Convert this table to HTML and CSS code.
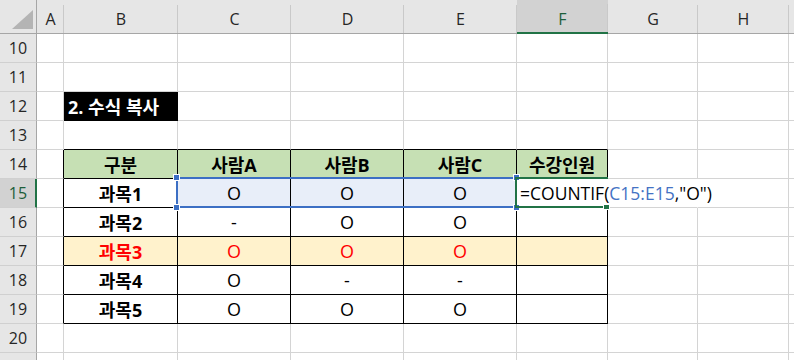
FILE: index.html
```html
<!DOCTYPE html>
<html lang="ko">
<head>
<meta charset="utf-8">
<title>수식 복사</title>
<link rel="stylesheet" href="styles.css">
</head>
<body>
<div class="sheet">
  <div class="ch corner"><span class="tri"></span></div>
  <div class="ch">A</div><div class="ch">B</div><div class="ch">C</div><div class="ch">D</div><div class="ch">E</div><div class="ch csel">F</div><div class="ch">G</div><div class="ch">H</div><div class="ch rest"></div>

  <div class="rh">10</div><div class="c"></div><div class="c"></div><div class="c"></div><div class="c"></div><div class="c"></div><div class="c"></div><div class="c"></div><div class="c"></div><div class="c rest"></div>
  <div class="rh">11</div><div class="c"></div><div class="c"></div><div class="c"></div><div class="c"></div><div class="c"></div><div class="c"></div><div class="c"></div><div class="c"></div><div class="c rest"></div>
  <div class="rh">12</div><div class="c"></div><div class="c title">2. 수식 복사</div><div class="c"></div><div class="c"></div><div class="c"></div><div class="c"></div><div class="c"></div><div class="c"></div><div class="c rest"></div>
  <div class="rh">13</div><div class="c"></div><div class="c tt"></div><div class="c tt"></div><div class="c tt"></div><div class="c tt"></div><div class="c tt"></div><div class="c"></div><div class="c"></div><div class="c rest"></div>

  <div class="rh">14</div><div class="c tl"></div><div class="c tb hd b">구분</div><div class="c tb hd b">사람A</div><div class="c tb hd b">사람B</div><div class="c tb hd b">사람C</div><div class="c tb hd b">수강인원</div><div class="c"></div><div class="c"></div><div class="c rest"></div>
  <div class="rh rsel">15</div><div class="c tl"></div><div class="c tb b">과목1</div><div class="c tb sel">O</div><div class="c tb sel">O</div><div class="c tb sel">O</div><div class="c tb nr left"><span class="formula">=COUNTIF(<span class="ref">C15:E15</span>,"O")</span></div><div class="c nr"></div><div class="c"></div><div class="c rest"></div>
  <div class="rh">16</div><div class="c tl"></div><div class="c tb b">과목2</div><div class="c tb">-</div><div class="c tb">O</div><div class="c tb">O</div><div class="c tb"></div><div class="c"></div><div class="c"></div><div class="c rest"></div>
  <div class="rh">17</div><div class="c tl"></div><div class="c tb y b red">과목3</div><div class="c tb y red">O</div><div class="c tb y red">O</div><div class="c tb y red">O</div><div class="c tb y"></div><div class="c"></div><div class="c"></div><div class="c rest"></div>
  <div class="rh">18</div><div class="c tl"></div><div class="c tb b">과목4</div><div class="c tb">O</div><div class="c tb">-</div><div class="c tb">-</div><div class="c tb"></div><div class="c"></div><div class="c"></div><div class="c rest"></div>
  <div class="rh">19</div><div class="c tl"></div><div class="c tb b">과목5</div><div class="c tb">O</div><div class="c tb">O</div><div class="c tb">O</div><div class="c tb"></div><div class="c"></div><div class="c"></div><div class="c rest"></div>
  <div class="rh">20</div><div class="c"></div><div class="c"></div><div class="c"></div><div class="c"></div><div class="c"></div><div class="c"></div><div class="c"></div><div class="c"></div><div class="c rest"></div>
  <div class="rh last"></div><div class="c last"></div><div class="c last"></div><div class="c last"></div><div class="c last"></div><div class="c last"></div><div class="c last"></div><div class="c last"></div><div class="c last"></div><div class="c rest last"></div>

  <div class="range">
    <span class="h h-tl"></span><span class="h h-tr"></span><span class="h h-bl"></span><span class="h h-br"></span>
  </div>
  <div class="active"><span class="fill"></span></div>
</div>
</body>
</html>
```
FILE: styles.css
```css
html, body {
  margin: 0;
  padding: 0;
  background: #ffffff;
  overflow: hidden;
}

.sheet {
  position: relative;
  width: 794px;
  height: 360px;
  display: grid;
  grid-template-columns: 37px 27px 114px 113px 113px 113px 91px 90px 91px 1fr;
  grid-template-rows: 34px repeat(11, 29px) 7px;
  font-family: "Open Sans", "Noto Sans CJK KR", sans-serif;
  color: #000;
  overflow: hidden;
}

.ch {
  box-sizing: border-box;
  background: linear-gradient(#c9c9c9, #c9c9c9) right bottom / 1px 28px no-repeat, #e6e6e6;
  border-bottom: 1px solid #a6a6a6;
  display: flex;
  align-items: center;
  justify-content: center;
  padding-top: 5px;
  font-size: 16px;
  color: #262626;
}

.ch.csel {
  background: linear-gradient(#c9c9c9, #c9c9c9) right bottom / 1px 28px no-repeat, #d2d2d2;
  border-bottom: 2px solid #217346;
  color: #1d5e3a;
  padding-top: 6px;
}

.ch.rest {
  background: #e6e6e6;
}

.corner {
  align-items: flex-end;
  justify-content: flex-end;
  padding: 0 3px 4px 0;
  border-right: 1px solid #a6a6a6;
  background: #e6e6e6;
}

.tri {
  width: 0;
  height: 0;
  border-left: 21px solid transparent;
  border-bottom: 19px solid #b4b4b4;
}

.rh {
  box-sizing: border-box;
  background: #e6e6e6;
  border-right: 1px solid #a6a6a6;
  border-bottom: 1px solid #d0d0d0;
  display: flex;
  align-items: center;
  justify-content: center;
  font-size: 16px;
  color: #262626;
}

.rh.rsel {
  background: #d2d2d2;
  border-right: 2px solid #217346;
  color: #1d5e3a;
  padding-left: 1px;
}

.last {
  border-bottom: none;
}

.c {
  box-sizing: border-box;
  border-right: 1px solid #d4d4d4;
  border-bottom: 1px solid #d4d4d4;
  display: flex;
  align-items: center;
  justify-content: center;
  font-size: 18px;
  white-space: nowrap;
}

.c.rest {
  border-right: none;
}

.c.last {
  border-bottom: none;
}

.tt {
  border-bottom-color: #000;
}

.tl {
  border-right-color: #000;
}

.tb {
  border-right-color: #000;
  border-bottom-color: #000;
}

.nr {
  border-right-color: transparent;
}

.hd {
  background: #c6e0b4;
}

.y {
  background: #fff2cc;
}

.sel {
  background: #e8eef9;
}

.b {
  font-weight: 700;
}

.red {
  color: #ff0000;
}

.title {
  background: #000;
  color: #fff;
  font-weight: 700;
  justify-content: flex-start;
  padding-left: 4px;
  border-right-color: #000;
  border-bottom-color: #000;
}

.left {
  justify-content: flex-start;
  padding-left: 3px;
}

.formula {
  font-size: 17.5px;
}

.ref {
  color: #4472c4;
}

.range {
  position: absolute;
  left: 176px;
  top: 177px;
  width: 341px;
  height: 31px;
  box-sizing: border-box;
  border: 2px solid #3c6fc4;
}

.h {
  position: absolute;
  width: 5px;
  height: 5px;
  background: #3c6fc4;
  border: 1px solid #fff;
}

.h-tl { left: -5px; top: -5px; }
.h-tr { right: -5px; top: -5px; }
.h-bl { left: -5px; bottom: -5px; }
.h-br { right: -5px; bottom: -5px; }

.active {
  position: absolute;
  left: 515px;
  top: 177px;
  width: 93px;
  height: 31px;
  box-sizing: border-box;
  border: 2px solid #217346;
  border-right: none;
}

.fill {
  position: absolute;
  right: -2px;
  bottom: -4px;
  width: 5px;
  height: 4px;
  background: #217346;
  border: 1px solid #fff;
}
```
